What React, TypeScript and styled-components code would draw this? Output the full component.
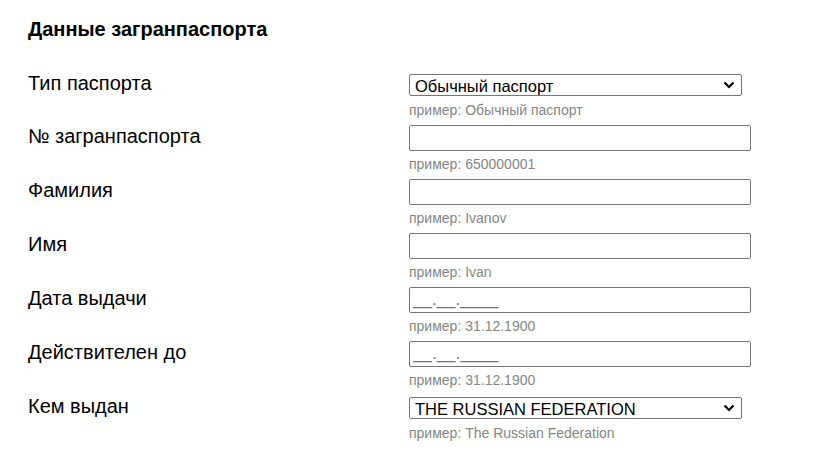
import React from "react";
import styled, { createGlobalStyle } from "styled-components";

const GlobalStyle = createGlobalStyle`
    body {
        margin: 0;
        background: #fff;
        font-family: "Liberation Sans", Arial, sans-serif;
        color: #000;
    }
`;

type Field = {
    label: string;
    kind: "select" | "input";
    hint: string;
    value?: string;
    mask?: boolean;
};

const fields: Field[] = [
    { label: "Тип паспорта", kind: "select", value: "Обычный паспорт", hint: "Обычный паспорт" },
    { label: "№ загранпаспорта", kind: "input", hint: "650000001" },
    { label: "Фамилия", kind: "input", hint: "Ivanov" },
    { label: "Имя", kind: "input", hint: "Ivan" },
    { label: "Дата выдачи", kind: "input", mask: true, hint: "31.12.1900" },
    { label: "Действителен до", kind: "input", mask: true, hint: "31.12.1900" },
    { label: "Кем выдан", kind: "select", value: "THE RUSSIAN FEDERATION", hint: "The Russian Federation" },
];

const Chevron = () => (
    <Arrow width="12" height="8" viewBox="0 0 12 8">
        <path d="M1.5 1.5 L6 6 L10.5 1.5" fill="none" stroke="#000" strokeWidth="2.2" />
    </Arrow>
);

const App = () => {
    return (
        <Page>
            <GlobalStyle />
            <Title>Данные загранпаспорта</Title>
            <Form>
                {fields.map((f) => (
                    <Row key={f.label}>
                        <Label>{f.label}</Label>
                        <Control>
                            {f.kind === "select" ? (
                                <SelectWrap>
                                    <Select defaultValue={f.value}>
                                        <option>{f.value}</option>
                                    </Select>
                                    <Chevron />
                                </SelectWrap>
                            ) : (
                                <Input type="text" placeholder={f.mask ? "__.__.____" : ""} />
                            )}
                            <Hint $afterSelect={f.kind === "select"}>пример: {f.hint}</Hint>
                        </Control>
                    </Row>
                ))}
            </Form>
        </Page>
    );
};

export default App;

const Page = styled.div`
    padding: 18px 28px;
`;

const Title = styled.h2`
    margin: 0 0 31px;
    font-size: 20px;
    line-height: 23px;
    font-weight: 700;
`;

const Form = styled.div`
    display: flex;
    flex-direction: column;
`;

const Row = styled.div`
    display: grid;
    grid-template-columns: 381px 1fr;
    align-items: start;
`;

const Label = styled.label`
    padding-top: 1px;
    font-size: 20px;
    line-height: 21px;
`;

const Control = styled.div`
    display: flex;
    flex-direction: column;
    align-items: flex-start;
`;

const SelectWrap = styled.div`
    position: relative;
    width: 333px;
    height: 22px;
    margin-top: 2px;
`;

const Select = styled.select`
    appearance: none;
    box-sizing: border-box;
    width: 100%;
    height: 22px;
    margin: 0;
    padding: 1px 24px 0 5px;
    font-family: "Liberation Sans", Arial, sans-serif;
    font-size: 16.5px;
    line-height: 20px;
    color: #000;
    background: #fff;
    border: 1px solid #767676;
    border-radius: 2px;
`;

const Arrow = styled.svg`
    position: absolute;
    right: 7px;
    top: 7px;
    pointer-events: none;
`;

const Input = styled.input`
    box-sizing: border-box;
    width: 342px;
    height: 26px;
    margin: 0;
    padding: 1px 3px;
    font-family: "Liberation Sans", Arial, sans-serif;
    font-size: 17px;
    border: 1px solid #767676;
    border-radius: 2px;

    &::placeholder {
        color: #757575;
    }
`;

const Hint = styled.div<{ $afterSelect?: boolean }>`
    margin: ${(p) => (p.$afterSelect ? "6px 0 7px" : "5px 0 7px")};
    font-size: 14px;
    line-height: 16px;
    color: #858585;
`;
